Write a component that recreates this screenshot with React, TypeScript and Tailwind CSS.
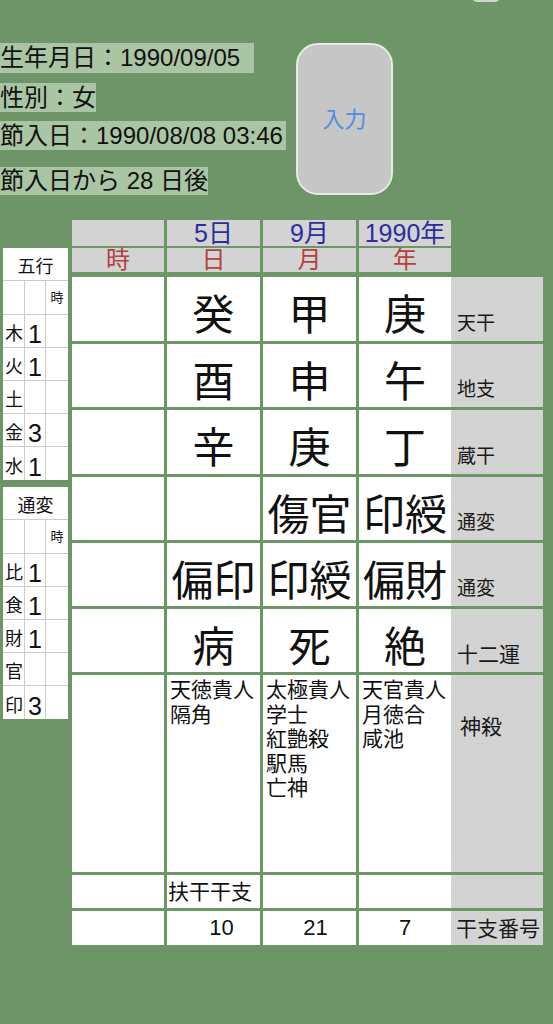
import React from "react"

// 命式表示画面
const headTop = ["", "5日", "9月", "1990年"]
const headBottom = ["時", "日", "月", "年"]
const colW = ["w-[92px]", "w-[93px]", "w-[93px]", "w-[92px]"]

type Row = {
  h: string
  cells: string[]
  label: string
  kind: "big" | "list" | "text" | "num"
}

const rows: Row[] = [
  { h: "h-[64px]", cells: ["", "癸", "甲", "庚"], label: "天干", kind: "big" },
  { h: "h-[63px]", cells: ["", "酉", "申", "午"], label: "地支", kind: "big" },
  { h: "h-[64px]", cells: ["", "辛", "庚", "丁"], label: "蔵干", kind: "big" },
  { h: "h-[63px]", cells: ["", "", "傷官", "印綬"], label: "通変", kind: "big" },
  { h: "h-[63px]", cells: ["", "偏印", "印綬", "偏財"], label: "通変", kind: "big" },
  { h: "h-[63px]", cells: ["", "病", "死", "絶"], label: "十二運", kind: "big" },
  {
    h: "h-[197px]",
    cells: ["", "天徳貴人\n隔角", "太極貴人\n学士\n紅艶殺\n駅馬\n亡神", "天官貴人\n月徳合\n咸池"],
    label: "神殺",
    kind: "list",
  },
  { h: "h-[33px]", cells: ["", "扶干干支", "", ""], label: "", kind: "text" },
  { h: "h-[34px]", cells: ["", "10", "21", "7"], label: "干支番号", kind: "num" },
]

const numPad = ["", "pl-[16px]", "pl-[12px]", ""]

function SideBox({ title, items }: { title: string; items: [string, string][] }) {
  return (
    <div className="w-[65px] bg-white text-[#111]">
      <div className="h-[33px] flex items-end justify-center pb-[4px] text-[18px] leading-none border-b border-[#c8cfc6]">
        {title}
      </div>
      <div className="h-[34px] grid grid-cols-[22px_21px_22px] border-b border-[#c8cfc6]">
        <div className="border-r border-[#c8cfc6]" />
        <div className="border-r border-[#c8cfc6]" />
        <div className="flex items-center justify-center text-[13px] leading-none">時</div>
      </div>
      {items.map(([k, v], i) => (
        <div
          key={i}
          className={`h-[33px] grid grid-cols-[22px_21px_22px] ${i < items.length - 1 ? "border-b border-[#c8cfc6]" : ""}`}
        >
          <div className="border-r border-[#c8cfc6] flex items-end pl-[2px] pb-[4px] text-[18px] leading-none">{k}</div>
          <div className="border-r border-[#c8cfc6] flex items-end justify-center text-[25px] leading-none">{v}</div>
          <div />
        </div>
      ))}
    </div>
  )
}

function Cell({ row, i }: { row: Row; i: number }) {
  const text = row.cells[i]
  const base = `${colW[i]} h-full bg-white text-[#111]`
  if (row.kind === "big") {
    return (
      <div className={`${base} flex items-center justify-center pt-[14px] text-[42px] leading-none whitespace-nowrap`}>
        {text}
      </div>
    )
  }
  if (row.kind === "list") {
    return (
      <div className={`${base} pl-[3px] pt-[3px] text-[21px] leading-[24.5px] whitespace-pre-line`}>{text}</div>
    )
  }
  if (row.kind === "text") {
    return <div className={`${base} flex items-center pl-[1px] text-[21px] leading-none`}>{text}</div>
  }
  return (
    <div className={`${base} flex items-center justify-center text-[22px] leading-none ${numPad[i]}`}>{text}</div>
  )
}

function Label({ row }: { row: Row }) {
  const base = "w-[92px] h-full bg-[#d3d3d3] text-[#1a1a1a] leading-none"
  if (row.label === "神殺") return <div className={`${base} pl-[9px] pt-[41px] text-[21px]`}>{row.label}</div>
  if (row.label === "干支番号")
    return <div className={`${base} flex items-center pl-[5px] text-[21px]`}>{row.label}</div>
  if (row.label === "十二運")
    return <div className={`${base} flex items-end pl-[6px] pb-[7px] text-[21px]`}>{row.label}</div>
  return <div className={`${base} flex items-end pl-[6px] pb-[8px] text-[19px]`}>{row.label}</div>
}

export default function App() {
  return (
    <div className="relative min-h-screen overflow-hidden bg-[#6e9568] font-['Liberation_Sans','Noto_Sans_CJK_JP',sans-serif] text-[#111]">
      <div className="absolute left-[472px] -top-[8px] w-[28px] h-[10px] rounded-full bg-[#cbdac6]" />

      {/* 上部の入力情報 */}
      <div className="flex pt-[43px]">
        <div className="w-[296px] flex flex-col items-start text-[24px]">
          <span className="h-[30px] leading-[30px] bg-[#a9c5a3] pr-[14px]">生年月日：1990/09/05</span>
          <span className="mt-[10px] h-[29px] leading-[29px] bg-[#a9c5a3]">性別：女</span>
          <span className="mt-[9px] h-[29px] leading-[29px] bg-[#a9c5a3] pr-[3px]">節入日：1990/08/08 03:46</span>
          <span className="mt-[17px] h-[28px] leading-[28px] bg-[#a9c5a3]">節入日から 28 日後</span>
        </div>
        <button className="w-[97px] h-[152px] rounded-[22px] border-2 border-[#e4ede1] bg-[#c6c6c6] text-[22px] text-[#4b8fe2] flex items-center justify-center">
          入力
        </button>
      </div>

      {/* 命式 */}
      <div className="flex mt-[25px]">
        <div className="w-[72px] pl-[3px] pt-[28px] flex flex-col gap-[7px]">
          <SideBox title="五行" items={[["木", "1"], ["火", "1"], ["土", ""], ["金", "3"], ["水", "1"]]} />
          <SideBox title="通変" items={[["比", "1"], ["食", "1"], ["財", "1"], ["官", ""], ["印", "3"]]} />
        </div>

        <div className="flex flex-col">
          <div className="flex gap-[3px] h-[26px]">
            {headTop.map((t, i) => (
              <div key={i} className={`${colW[i]} bg-[#d3d3d3] flex items-center justify-center text-[25px] leading-none text-[#2c2ca0]`}>
                {t}
              </div>
            ))}
          </div>
          <div className="flex gap-[3px] h-[24px] mt-[2px]">
            {headBottom.map((t, i) => (
              <div key={i} className={`${colW[i]} bg-[#d3d3d3] flex items-center justify-center text-[24px] leading-none text-[#b3413f]`}>
                {t}
              </div>
            ))}
          </div>

          <div className="flex flex-col gap-[3px] mt-[5px]">
            {rows.map((row, r) => (
              <div key={r} className={`flex ${row.h}`}>
                <div className="flex gap-[3px] h-full">
                  {[0, 1, 2, 3].map((i) => (
                    <Cell key={i} row={row} i={i} />
                  ))}
                </div>
                <Label row={row} />
              </div>
            ))}
          </div>
        </div>
      </div>
    </div>
  )
}
